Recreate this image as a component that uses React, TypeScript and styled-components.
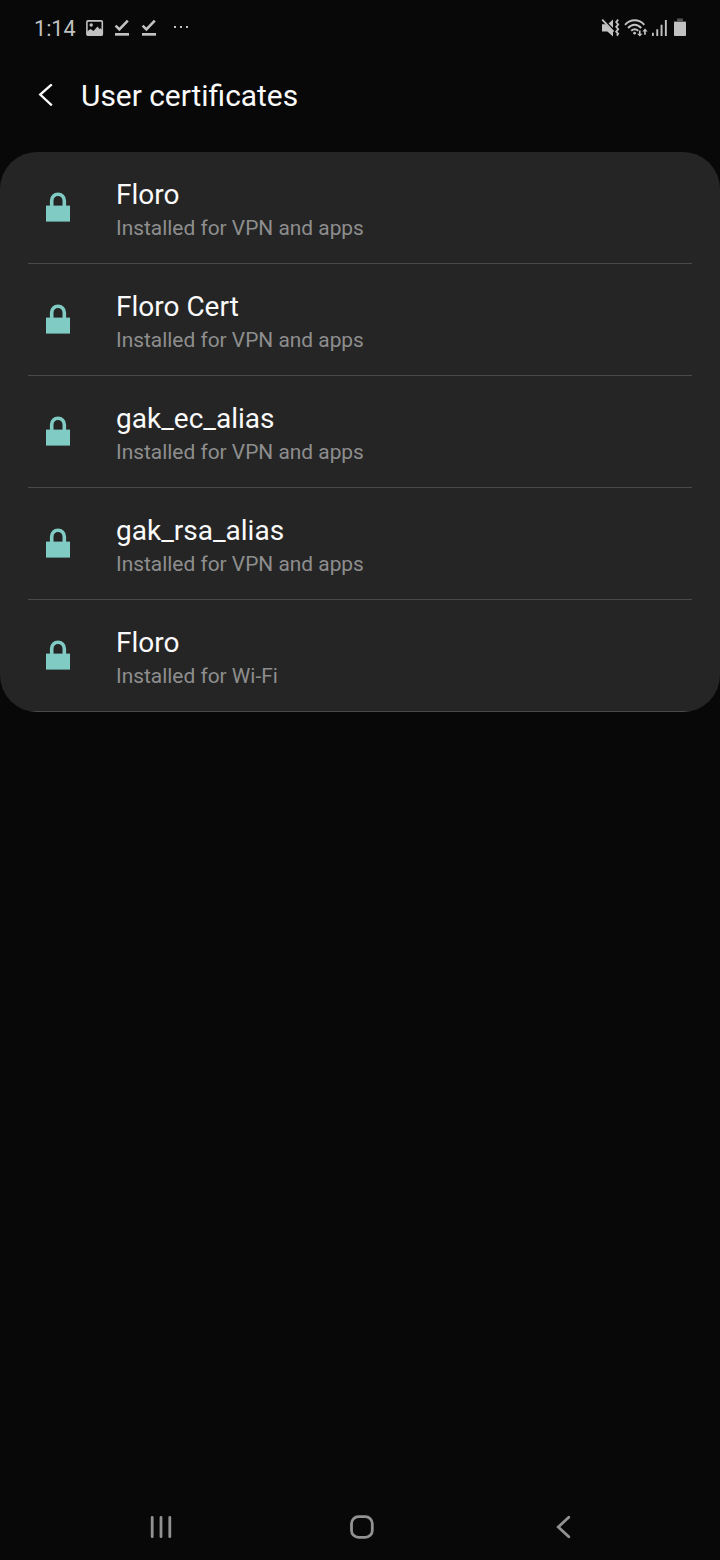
import React from "react";
import styled, { createGlobalStyle } from "styled-components";

const GlobalStyle = createGlobalStyle`
  * { box-sizing: border-box; }
  body {
    margin: 0;
    background: #080808;
    font-family: Roboto, "Liberation Sans", sans-serif;
  }
`;

const Screen = styled.div`
  width: 720px;
  height: 1560px;
  display: flex;
  flex-direction: column;
  background: #080808;
  color: #fafafa;
  overflow: hidden;
`;

const StatusBar = styled.div`
  height: 56px;
  padding: 0 33px 0 34px;
  display: flex;
  align-items: center;
  justify-content: space-between;
  color: #c2c2c2;
`;

const StatusGroup = styled.div`
  display: flex;
  align-items: center;
`;

const Clock = styled.span`
  width: 50px;
  padding-top: 2px;
  font-size: 21.6px;
  line-height: 26px;
`;

const Glyph = styled.svg<{ $gap?: number }>`
  display: block;
  flex: none;
  margin-left: ${({ $gap = 0 }) => $gap}px;
`;

const Header = styled.header`
  height: 96px;
  padding: 0 36px 16px;
  display: flex;
  align-items: center;
`;

const Title = styled.h1`
  margin: 0 0 0 25px;
  font-size: 29.9px;
  font-weight: 400;
  line-height: 36px;
`;

const Card = styled.ul`
  margin: 0;
  padding: 0;
  list-style: none;
  background: #252525;
  border-radius: 37px;
  overflow: hidden;
`;

const Row = styled.li`
  height: 112px;
  padding: 0 28px;
`;

const RowInner = styled.div`
  height: 112px;
  padding-left: 16px;
  display: flex;
  align-items: flex-start;
  border-bottom: 1px solid #4a4a4a;
`;

const LockBox = styled.div`
  padding-top: 38px;
  width: 72px;
`;

const RowText = styled.div`
  padding-top: 26px;
`;

const Name = styled.div`
  font-size: 28px;
  line-height: 34px;
  color: #fafafa;
`;

const Detail = styled.div`
  font-size: 20.9px;
  line-height: 26px;
  margin-top: 3px;
  color: #8e8e8e;
`;

const Spacer = styled.div`
  flex: 1;
`;

const NavBar = styled.nav`
  height: 66px;
  padding: 0 147px 0 148px;
  display: flex;
  align-items: center;
  justify-content: space-between;
  color: #929292;
`;

const Check = ({ gap }: { gap: number }) => (
  <Glyph $gap={gap} width="17" height="18" viewBox="0 0 17 18">
    <path d="M1.6 6.6 5.4 10.4 13.8 1.6" fill="none" stroke="currentColor" strokeWidth="2.6" />
    <path d="M1 14h14v2.7H1z" fill="currentColor" />
  </Glyph>
);

const Picture = () => (
  <Glyph $gap={2} width="18" height="17" viewBox="0 0 18 17">
    <rect x="0.9" y="0.9" width="15.4" height="14.4" rx="1" fill="none" stroke="currentColor" strokeWidth="1.6" />
    <circle cx="5.2" cy="5" r="1.7" fill="currentColor" />
    <path d="M1 11.5 4.5 9 7.5 11 11.5 6.5 13.5 9 14.5 8.3 16.5 10.5V15.5H1z" fill="currentColor" />
  </Glyph>
);

const Mute = () => (
  <Glyph width="20" height="20" viewBox="0 0 20 20">
    <path d="M1 6.2h3.6L12 13.5v5L6.4 13.6H1z" fill="currentColor" />
    <path d="M12 1.4v8.4L7.6 5.4z" fill="currentColor" />
    <path d="M1.2 1.6 12.5 13.6" stroke="currentColor" strokeWidth="1.8" />
    <path d="M17.2 1.6 15.2 4 17.2 6.4 15.2 8.8 17.2 11.2 15.2 13.6 17.2 15.8 15.8 17.6" fill="none" stroke="currentColor" strokeWidth="1.8" />
  </Glyph>
);

const Wifi = () => (
  <Glyph $gap={3} width="25" height="20" viewBox="0 0 25 20">
    <g fill="none" stroke="currentColor" strokeWidth="1.9">
      <path d="M1 6.8C6.5 .8 15 .8 20.3 6.8" />
      <path d="M4.1 10C8 5.6 13.3 5.6 17.2 10" />
      <path d="M7.2 12.8C9.5 10.6 11.9 10.6 14.2 12.8" />
    </g>
    <circle cx="10.6" cy="15.2" r="1.4" fill="currentColor" />
    <path d="M14.9 12.6h1.7v3.2h1.9l-2.7 2.8-2.7-2.8h1.8z" fill="currentColor" />
    <path d="M20.1 16.8h1.7v-3.3h1.9l-2.7-3-2.7 3h1.8z" fill="currentColor" />
  </Glyph>
);

const Signal = () => (
  <Glyph $gap={3} width="18" height="20" viewBox="0 0 18 20">
    <path d="M0 14.7h1.8V18H0zM4.3 11.2h1.9V18H4.3zM8.6 6.8h1.9V18H8.6zM12.9 2h1.9V18h-1.9z" fill="currentColor" />
  </Glyph>
);

const Battery = () => (
  <Glyph $gap={4} width="13" height="20" viewBox="0 0 13 20">
    <path d="M3.1 .4h5.8v2.5h3V6H0V2.9h3.1z" fill="#555" />
    <rect x="0" y="4" width="12" height="14" rx="0.8" fill="currentColor" />
  </Glyph>
);

const Lock = () => (
  <Glyph $gap={2} width="24" height="32" viewBox="0 0 24 32">
    <path d="M5.7 17V10.5a6.3 6.3 0 0 1 12.6 0V17" fill="none" stroke="#80cbc4" strokeWidth="3.6" />
    <rect y="15.6" width="24" height="16" fill="#80cbc4" />
  </Glyph>
);

const VPN = "Installed for VPN and apps";

const certificates = [
  { name: "Floro", detail: VPN },
  { name: "Floro Cert", detail: VPN },
  { name: "gak_ec_alias", detail: VPN },
  { name: "gak_rsa_alias", detail: VPN },
  { name: "Floro", detail: "Installed for Wi-Fi" },
];

export default function App() {
  return (
    <>
      <GlobalStyle />
      <Screen>
        <StatusBar>
          <StatusGroup>
            <Clock>1:14</Clock>
            <Picture />
            <Check gap={10} />
            <Check gap={10} />
            <Glyph $gap={16} width="17" height="4" viewBox="0 0 17 4">
              <path d="M0 0h2v2H0zM6 0h2v2H6zM12 0h2v2h-2z" fill="currentColor" />
            </Glyph>
          </StatusGroup>
          <StatusGroup>
            <Mute />
            <Wifi />
            <Signal />
            <Battery />
          </StatusGroup>
        </StatusBar>
        <Header>
          <Glyph width="20" height="24" viewBox="0 0 20 24">
            <path d="M15.8 .3 4.2 10.6 15.8 21.4" fill="none" stroke="#fafafa" strokeWidth="2.3" />
          </Glyph>
          <Title>User certificates</Title>
        </Header>
        <Card>
          {certificates.map((c, i) => (
            <Row key={i}>
              <RowInner>
                <LockBox>
                  <Lock />
                </LockBox>
                <RowText>
                  <Name>{c.name}</Name>
                  <Detail>{c.detail}</Detail>
                </RowText>
              </RowInner>
            </Row>
          ))}
        </Card>
        <Spacer />
        <NavBar>
          <Glyph width="26" height="26" viewBox="0 0 26 26">
            <path d="M4.2 3.3v19.4M13 3.3v19.4M21.8 3.3v19.4" stroke="currentColor" strokeWidth="2.8" strokeLinecap="round" />
          </Glyph>
          <Glyph width="26" height="26" viewBox="0 0 26 26">
            <rect x="3.5" y="2.6" width="20.8" height="20.8" rx="7" fill="none" stroke="currentColor" strokeWidth="2.8" />
          </Glyph>
          <Glyph width="26" height="26" viewBox="0 0 26 26">
            <path d="M21.8 3.3 11.3 13 21.8 22.8" fill="none" stroke="currentColor" strokeWidth="2.8" strokeLinecap="round" />
          </Glyph>
        </NavBar>
      </Screen>
    </>
  );
}
